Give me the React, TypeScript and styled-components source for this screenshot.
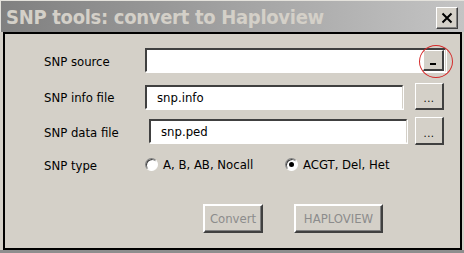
import React from "react";
import styled, { createGlobalStyle } from "styled-components";

const Global = createGlobalStyle`
  html, body { margin: 0; padding: 0; background: #d4d0c8; overflow: hidden; }
  #root { width: 464px; height: 253px; }
`;

const FONT = `"DejaVu Sans Condensed", "DejaVu Sans", sans-serif`;

const Window = styled.div`
  width: 464px;
  height: 253px;
  display: flex;
  flex-direction: column;
  background: #d4d0c8;
  box-sizing: border-box;
  font-family: ${FONT};
  font-stretch: condensed;
`;

const TitleBar = styled.div`
  height: 32px;
  box-sizing: border-box;
  border-top: 1px solid #e4e2dc;
  border-left: 1px solid #e4e2dc;
  background: linear-gradient(to right, #808080, #c4c4c4);
  display: flex;
  align-items: center;
  padding: 0 6px 0 5px;
`;

const Title = styled.div`
  flex: 1;
  color: #d4d0c8;
  font-weight: bold;
  font-size: 20px;
  letter-spacing: -0.3px;
  white-space: nowrap;
`;

const CloseButton = styled.div`
  width: 22px;
  height: 22px;
  box-sizing: border-box;
  background: #d4d0c8;
  border-top: 1px solid #ffffff;
  border-left: 1px solid #ffffff;
  border-right: 1px solid #404040;
  border-bottom: 1px solid #404040;
  box-shadow: inset -1px -1px 0 #808080;
  display: flex;
  align-items: center;
  justify-content: center;
  margin-top: 2px;
`;

const Frame = styled.div`
  flex: 1;
  display: flex;
  padding: 0 2px 0 3px;
  border-bottom: 3px solid #8e8e8e;
`;

const Body = styled.div`
  flex: 1;
  border: 2px solid #000;
  background: #d4d0c8;
  display: flex;
  flex-direction: column;
  padding: 14px 0 0 39px;
`;

const Row = styled.div<{ $h: number; $gap: number }>`
  display: flex;
  align-items: center;
  height: ${(p) => p.$h}px;
  margin-bottom: ${(p) => p.$gap}px;
`;

const Label = styled.div`
  width: 101px;
  font-size: 13px;
  color: #000;
  padding-top: 2px;
`;

const TextBox = styled.div<{ $w: number; $shift?: number }>`
  position: relative;
  width: ${(p) => p.$w}px;
  height: 24px;
  box-sizing: border-box;
  margin-left: ${(p) => p.$shift ?? 0}px;
  background: #fff;
  border-top: 2px solid #404040;
  border-left: 2px solid #404040;
  border-right: 1px solid #d4d0c8;
  border-bottom: 1px solid #ffffff;
  box-shadow: 1px 1px 0 #ffffff;
  display: flex;
  align-items: center;
  padding-left: 10px;
  font-size: 13px;
  color: #000;
`;

const InnerButton = styled.div`
  position: absolute;
  right: 1px;
  top: 0;
  width: 21px;
  height: 21px;
  box-sizing: border-box;
  background: #d4d0c8;
  border-top: 1px solid #ffffff;
  border-left: 1px solid #ffffff;
  border-right: 2px solid #404040;
  border-bottom: 2px solid #404040;
  display: flex;
  align-items: flex-end;
  justify-content: center;
  padding-bottom: 4px;
`;

const Dash = styled.div`
  width: 6px;
  height: 2px;
  background: #000;
`;

const Annotation = styled.div`
  position: absolute;
  right: -8px;
  top: -5px;
  width: 34px;
  height: 33px;
  box-sizing: border-box;
  border: 1px solid #d42a2a;
  border-radius: 50%;
  pointer-events: none;
`;

const BrowseButton = styled.div<{ $gap: number; $h: number }>`
  width: 29px;
  height: ${(p) => p.$h}px;
  margin-left: ${(p) => p.$gap}px;
  box-sizing: border-box;
  background: #d4d0c8;
  border-top: 1px solid #ffffff;
  border-left: 1px solid #ffffff;
  border-right: 2px solid #404040;
  border-bottom: 2px solid #404040;
  display: flex;
  align-items: flex-end;
  justify-content: center;
  padding-bottom: 4px;
  font-size: 11px;
  line-height: 11px;
  color: #000;
  letter-spacing: 0.5px;
`;

const RadioGroup = styled.div`
  display: flex;
  align-items: center;
`;

const RadioItem = styled.div<{ $w: number }>`
  display: flex;
  align-items: center;
  width: ${(p) => p.$w}px;
  font-size: 13px;
  gap: 5px;
`;

const RadioCircle = styled.div<{ $on?: boolean }>`
  width: 13px;
  height: 13px;
  box-sizing: border-box;
  border-radius: 50%;
  background: #fff;
  border: 1px solid;
  border-color: #808080 #ffffff #ffffff #808080;
  box-shadow: inset 1px 1px 0 #404040;
  display: flex;
  align-items: center;
  justify-content: center;
  &::after {
    content: "";
    width: 5px;
    height: 5px;
    border-radius: 50%;
    background: ${(p) => (p.$on ? "#000" : "transparent")};
  }
`;

const ButtonRow = styled.div`
  display: flex;
  gap: 31px;
  padding-left: 159px;
  margin-top: 32px;
`;

const PushButton = styled.div<{ $w: number }>`
  width: ${(p) => p.$w}px;
  height: 29px;
  box-sizing: border-box;
  background: #d4d0c8;
  border-top: 2px solid #ffffff;
  border-left: 2px solid #ffffff;
  border-right: 2px solid #404040;
  border-bottom: 2px solid #404040;
  box-shadow: inset -1px -1px 0 #808080;
  display: flex;
  align-items: center;
  justify-content: center;
  font-size: 13px;
  color: #8c8c8c;
`;

export default function App() {
  return (
    <>
      <Global />
      <Window>
        <TitleBar>
          <Title>SNP tools: convert to Haploview</Title>
          <CloseButton>
            <svg width="12" height="12" viewBox="0 0 12 12">
              <path d="M1.5 1.5 L10.5 10.5 M10.5 1.5 L1.5 10.5" stroke="#000" strokeWidth="2" />
            </svg>
          </CloseButton>
        </TitleBar>
        <Frame>
          <Body>
            <Row $h={24} $gap={11}>
              <Label>SNP source</Label>
              <TextBox $w={301}>
                <InnerButton>
                  <Dash />
                </InnerButton>
                <Annotation />
              </TextBox>
            </Row>
            <Row $h={27} $gap={7}>
              <Label>SNP info file</Label>
              <TextBox $w={258}>snp.info</TextBox>
              <BrowseButton $gap={12} $h={27}>...</BrowseButton>
            </Row>
            <Row $h={28} $gap={11}>
              <Label>SNP data file</Label>
              <TextBox $w={258} $shift={4}>snp.ped</TextBox>
              <BrowseButton $gap={8} $h={28}>...</BrowseButton>
            </Row>
            <Row $h={16} $gap={0}>
              <Label>SNP type</Label>
              <RadioGroup>
                <RadioItem $w={140}>
                  <RadioCircle />
                  A, B, AB, Nocall
                </RadioItem>
                <RadioItem $w={120}>
                  <RadioCircle $on />
                  ACGT, Del, Het
                </RadioItem>
              </RadioGroup>
            </Row>
            <ButtonRow>
              <PushButton $w={60}>Convert</PushButton>
              <PushButton $w={89}>HAPLOVIEW</PushButton>
            </ButtonRow>
          </Body>
        </Frame>
      </Window>
    </>
  );
}
